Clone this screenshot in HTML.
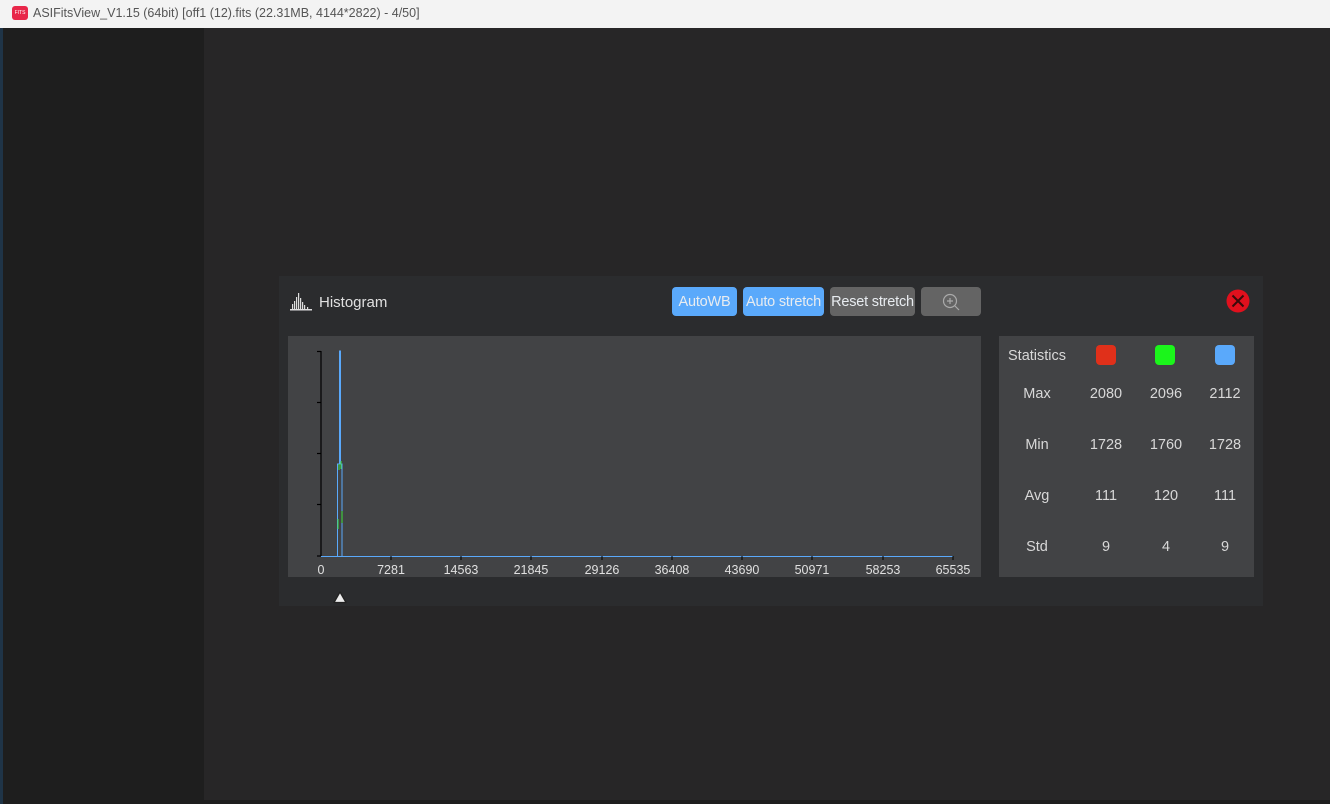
<!DOCTYPE html>
<html><head><meta charset="utf-8"><style>
*{margin:0;padding:0;box-sizing:border-box}
body{width:1330px;height:804px;overflow:hidden;background:#272627;font-family:"Liberation Sans",sans-serif;position:relative}
.title{position:absolute;left:0;top:0;width:1330px;height:28px;background:#f3f3f3;color:#555;font-size:12.5px}
.title span{position:absolute;left:33px;top:6px}
.logo{position:absolute;left:12px;top:6px;width:16px;height:14px;background:#e8274a;border-radius:3px;color:#fff;font-size:5px;line-height:14px;text-align:center}
.side{position:absolute;left:3px;top:28px;width:201px;height:776px;background:#1e1e1e}
.edge{position:absolute;left:0;top:28px;width:3px;height:776px;background:#1f3447}
.bot{position:absolute;left:204px;top:800px;width:1126px;height:4px;background:#1e1e1e}
.panel{position:absolute;left:279px;top:276px;width:984px;height:330px;background:#2b2c2e}
.abs{position:absolute}
.btn{position:absolute;top:287px;height:29px;border-radius:4px;color:#e8ecf0;font-size:14.5px;line-height:31px;text-align:center;white-space:nowrap;letter-spacing:-0.2px}
.stats{position:absolute;left:999px;top:336px;width:255px;height:241px;background:#424345;color:#d8d8d8;font-size:14.5px}
.stats div{position:absolute;text-align:center;width:50px}
</style></head><body>
<div class="title"><div class="logo">FITS</div><span>ASIFitsView_V1.15 (64bit) [off1 (12).fits (22.31MB, 4144*2822) - 4/50]</span></div>
<div class="edge"></div><div class="side"></div><div class="bot"></div>
<div class="panel"></div>
<svg class="abs" style="left:289px;top:292px" width="24" height="20"><g fill="#ddd"><rect x="1" y="17" width="22" height="1.5"/><rect x="3" y="12" width="1.2" height="5"/><rect x="5" y="9" width="1.2" height="8"/><rect x="7" y="5" width="1.2" height="12"/><rect x="9" y="1" width="1.2" height="16"/><rect x="11" y="6" width="1.2" height="11"/><rect x="13" y="10" width="1.2" height="7"/><rect x="15" y="13" width="1.2" height="4"/><rect x="18" y="15" width="1.2" height="2"/></g></svg>
<div class="abs" style="left:319px;top:294px;color:#e0e0e0;font-size:15px">Histogram</div>
<div class="btn" style="left:672px;width:65px;background:#5aa9fb">AutoWB</div>
<div class="btn" style="left:743px;width:81px;background:#5aa9fb">Auto stretch</div>
<div class="btn" style="left:830px;width:85px;background:#646464">Reset stretch</div>
<div class="btn" style="left:921px;width:60px;background:#646464"></div>
<svg class="abs" style="left:940px;top:291px" width="22" height="22"><circle cx="10" cy="10" r="6.5" fill="none" stroke="#aaa" stroke-width="1.2"/><path d="M10 7v6M7 10h6M15 15l4 4" stroke="#aaa" stroke-width="1.2"/></svg>
<svg class="abs" style="left:1225px;top:288px" width="26" height="26"><circle cx="13" cy="13" r="11.5" fill="#e0101d"/><path d="M7.5 7.5l11 11M18.5 7.5l-11 11" stroke="#3a0a0a" stroke-width="2"/></svg>
<svg class="abs" style="left:288px;top:336px" width="693" height="241">
<rect width="693" height="241" fill="#424345"/>
<g stroke="#000" stroke-width="1.2"><line x1="33" y1="15" x2="33" y2="220"/><line x1="29" y1="15.5" x2="33" y2="15.5"/><line x1="29" y1="66.5" x2="33" y2="66.5"/><line x1="29" y1="117.5" x2="33" y2="117.5"/><line x1="29" y1="168.5" x2="33" y2="168.5"/><line x1="29" y1="220" x2="33" y2="220"/></g>
<line x1="33" y1="220.5" x2="665" y2="220.5" stroke="#5aa9fb" stroke-width="1"/>
<g stroke="#000"><line x1="103" y1="220" x2="103" y2="224"/><line x1="173" y1="220" x2="173" y2="224"/><line x1="243" y1="220" x2="243" y2="224"/><line x1="314" y1="220" x2="314" y2="224"/><line x1="384" y1="220" x2="384" y2="224"/><line x1="454" y1="220" x2="454" y2="224"/><line x1="524" y1="220" x2="524" y2="224"/><line x1="595" y1="220" x2="595" y2="224"/><line x1="665" y1="220" x2="665" y2="224"/></g>
<path d="M49.5 220V128h2V15h1V128h1.5V220" fill="none" stroke="#5aa9fb" stroke-width="1"/>
<path d="M50 183v10M51 128v6M53 125v8M54 175v12" stroke="#3de03d" stroke-width="1"/>
<g fill="#e0e0e0" font-size="12.5" text-anchor="middle" font-family="Liberation Sans,sans-serif"><text x="33" y="238">0</text><text x="103" y="238">7281</text><text x="173" y="238">14563</text><text x="243" y="238">21845</text><text x="314" y="238">29126</text><text x="384" y="238">36408</text><text x="454" y="238">43690</text><text x="524" y="238">50971</text><text x="595" y="238">58253</text><text x="665" y="238">65535</text></g>
</svg>
<svg class="abs" style="left:332px;top:589px" width="16" height="16"><path d="M2 13.5L8 3L14 13.5Z" fill="#eee" stroke="#222" stroke-width="1.3" stroke-linejoin="round"/></svg>
<div class="stats">
<div style="left:9px;top:12px;width:auto">Statistics</div>
<div style="left:97px;top:9px;width:20px;height:20px;background:#e0301a;border-radius:4px"></div>
<div style="left:156px;top:9px;width:20px;height:20px;background:#1bf51b;border-radius:4px"></div>
<div style="left:216px;top:9px;width:20px;height:20px;background:#5aa9fb;border-radius:4px"></div>
<div style="left:13px;top:50px">Max</div><div style="left:82px;top:50px">2080</div><div style="left:142px;top:50px">2096</div><div style="left:201px;top:50px">2112</div>
<div style="left:13px;top:101px">Min</div><div style="left:82px;top:101px">1728</div><div style="left:142px;top:101px">1760</div><div style="left:201px;top:101px">1728</div>
<div style="left:13px;top:152px">Avg</div><div style="left:82px;top:152px">111</div><div style="left:142px;top:152px">120</div><div style="left:201px;top:152px">111</div>
<div style="left:13px;top:203px">Std</div><div style="left:82px;top:203px">9</div><div style="left:142px;top:203px">4</div><div style="left:201px;top:203px">9</div>
</div>
</body></html>
